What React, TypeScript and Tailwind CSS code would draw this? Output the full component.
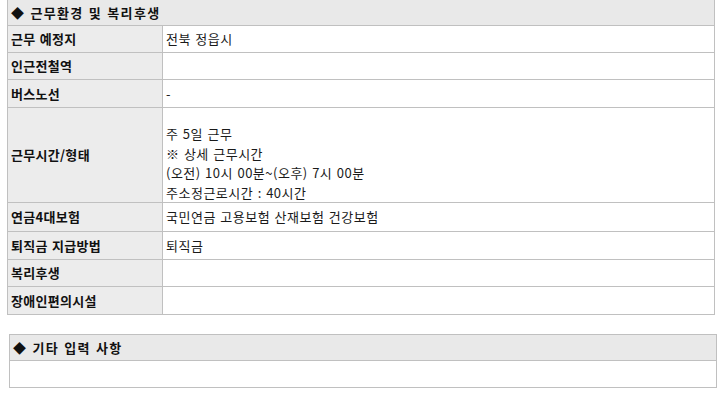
import React from 'react';

type Row = {
  label: string;
  value?: React.ReactNode;
  h: string;
};

const rows: Row[] = [
  { label: '근무 예정지', value: '전북 정읍시', h: 'h-[27px]' },
  { label: '인근전철역', value: '', h: 'h-[27px]' },
  { label: '버스노선', value: '-', h: 'h-[28px]' },
  {
    label: '근무시간/형태',
    value: (
      <div className="pt-[16px] leading-[19.5px]">
        <p>주 5일 근무</p>
        <p>※ 상세 근무시간</p>
        <p>(오전) 10시 00분~(오후) 7시 00분</p>
        <p>주소정근로시간 : 40시간</p>
      </div>
    ),
    h: 'h-[95px]',
  },
  { label: '연금4대보험', value: '국민연금 고용보험 산재보험 건강보험', h: 'h-[29px]' },
  { label: '퇴직금 지급방법', value: '퇴직금', h: 'h-[28px]' },
  { label: '복리후생', value: '', h: 'h-[27px]' },
  { label: '장애인편의시설', value: '', h: 'h-[27px]' },
];

function SectionHeader({ title }: { title: string }) {
  return (
    <div className="flex h-[26px] items-center border-b border-[#c0c0c0] bg-[#e9e9e9] pl-[3px] text-[13px] font-bold tracking-[1.3px] text-[#111] [word-spacing:1px]">
      ◆ {title}
    </div>
  );
}

export default function App() {
  return (
    <div
      className="h-[406px] w-[726px] overflow-hidden bg-white text-[13px] text-[#1a1a1a]"
      style={{ fontFamily: '"Noto Sans CJK KR", "Noto Sans", sans-serif' }}
    >
      {/* 근무환경 및 복리후생 */}
      <div className="ml-[7px] w-[708px] border-x border-b border-[#c0c0c0]">
        <SectionHeader title="근무환경 및 복리후생" />
        {rows.map((row, i) => (
          <div
            key={row.label}
            className={`flex ${row.h} ${i < rows.length - 1 ? 'border-b border-[#c0c0c0]' : ''}`}
          >
            <div className="flex w-[155px] shrink-0 items-center border-r border-[#c0c0c0] bg-[#ececec] pl-[3px] font-bold tracking-[0.3px] text-[#111] [word-spacing:1px]">
              {row.label}
            </div>
            <div className="flex flex-1 items-center pl-[3px] tracking-[0.5px] [word-spacing:1px]">
              {typeof row.value === 'string' ? row.value : <div className="self-start">{row.value}</div>}
            </div>
          </div>
        ))}
      </div>

      {/* 기타 입력 사항 */}
      <div className="ml-[9px] mt-[19px] w-[708px] border border-[#c0c0c0]">
        <SectionHeader title="기타 입력 사항" />
        <div className="h-[26px]" />
      </div>
    </div>
  );
}
